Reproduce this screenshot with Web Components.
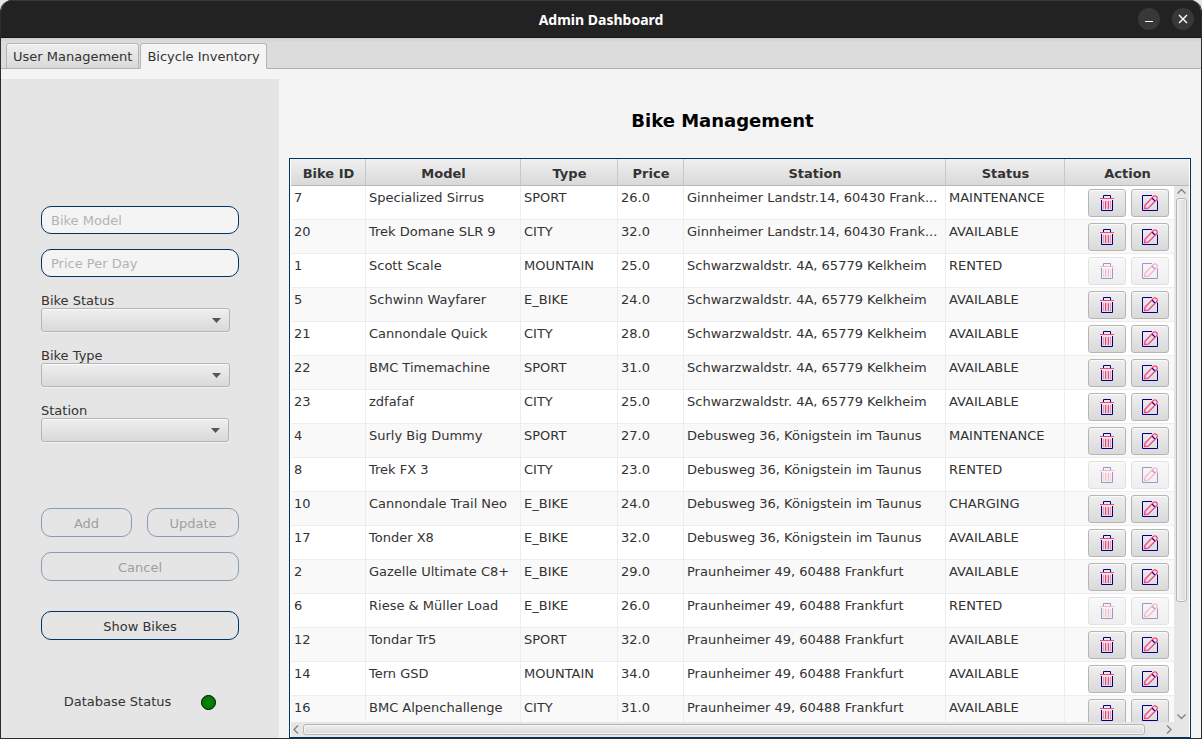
<!DOCTYPE html>
<html lang="en">
<head>
<meta charset="utf-8">
<title>Admin Dashboard</title>
<style>
  html { background: #e6e6e6; }
  body { margin: 0; font: 13px/16px "DejaVu Sans", Verdana, sans-serif; color: #333; }
</style>
</head>
<body>
<app-window>
  <title-bar slot="title">Admin Dashboard</title-bar>
  <tab-strip slot="tabs"></tab-strip>
  <bike-form slot="side"></bike-form>
  <bike-inventory>Bike Management</bike-inventory>
</app-window>

<script>
const element = (name, markup, setup) => customElements.define(name, class extends HTMLElement {
  constructor() {
    super();
    this.attachShadow({ mode: 'open' }).innerHTML =
      '<style>*, ::before, ::after { box-sizing: border-box; } :host { box-sizing: border-box; }</style>' + markup;
  }
  connectedCallback() { if (setup) setup.call(this, this.shadowRoot); }
});

element('app-window', `
<style>
  :host { display: flex; flex-direction: column; height: 100vh; border: 1px solid #2b2b2b; border-top: 0;
    border-radius: 12px 12px 0 0; background: #f4f4f4; overflow: hidden; }
  main { flex: 1; min-height: 0; display: flex; padding-top: 10px; }
  slot[name=side]::slotted(*) { flex: none; }
  slot:not([name])::slotted(*) { flex: 1; min-width: 0; }
</style>
<slot name="title"></slot>
<slot name="tabs"></slot>
<main><slot name="side"></slot><slot></slot></main>`);

element('title-bar', `
<style>
  :host { display: grid; grid-template-columns: 1fr auto 1fr; align-items: center; flex: none; height: 38px;
    background: #222; border-top: 1px solid #373737; border-bottom: 1px solid #151515; padding: 0 7px; }
  h1 { margin: 0; grid-column: 2; font: bold 14px/18px "Noto Sans", sans-serif; color: #fff; padding-top: 2px; }
  nav { display: flex; gap: 12px; justify-content: flex-end; }
  button { width: 22px; height: 22px; padding: 0; border: 0; border-radius: 50%; background: #383838; }
  svg { display: block; margin: auto; }
</style>
<h1><slot></slot></h1>
<nav>
  <button aria-label="Minimize"><svg width="22" height="22" fill="none" stroke="#fff"><path d="M7 13.500h8"/></svg></button>
  <button aria-label="Close"><svg width="22" height="22" fill="none" stroke="#fff" stroke-width="1.400"><path d="M7 7l8 8M15 7l-8 8"/></svg></button>
</nav>`);

element('tab-strip', `
<style>
  :host { display: flex; flex: none; height: 31px; padding: 5px 5px 0; gap: 1px; align-items: stretch;
    background: linear-gradient(#cfcfcf, #dcdcdc 4px); box-shadow: inset 0 -1px #b0b0b0; }
  button { padding: 2px 6px 0; border: 1px solid #b5b5b5; border-radius: 3px 3px 0 0; font: inherit; color: #333;
    background: linear-gradient(#efefef, #d9d9d9); box-shadow: inset 0 1px #f8f8f8; }
  button[aria-selected=true] { border-bottom-color: #f4f4f4; background: #f4f4f4; }
</style>
<button role="tab" aria-selected="false">User Management</button>
<button role="tab" aria-selected="true">Bicycle Inventory</button>`);

element('choice-field', `
<style>
  :host { display: grid; grid-template-columns: 1fr 28px; width: 189px; }
  label { grid-column: 1 / -1; height: 16px; line-height: 18px; }
  select { grid-area: 2 / 1 / 3 / 3; appearance: none; height: 24px; padding: 0 8px; border: 1px solid #b5b5b5;
    border-radius: 3px; font: inherit; background: linear-gradient(#efefef, #d9d9d9);
    box-shadow: inset 0 1px #fafafa, 0 1px #f0f0f0; }
  svg { grid-area: 2 / 2; place-self: center; pointer-events: none; z-index: 1; }
</style>
<label for="pick"><slot></slot></label>
<select id="pick"><option></option></select>
<svg width="9" height="5"><path d="M0 0h9L4.500 5z" fill="#555"/></svg>`);

element('bike-form', `
<style>
  :host { display: flex; flex-direction: column; width: 278px; padding: 127px 40px 0; background: #e5e5e5; }
  form { display: grid; gap: 15px; }
  input, button { width: 100%; font: inherit; border: 1px solid #003366; border-radius: 10px; }
  input { height: 28px; padding: 0 9px; background: #f4f4f4; color: #333; }
  input::placeholder { color: #b3b3b3; opacity: 1; }
  button { height: 29px; padding: 2px 0 0; background: transparent; color: #333; }
  button:disabled { opacity: .4; }
  .edit { display: grid; grid-template-columns: 91px 1fr; gap: 15px; margin-top: 66px; }
  .wide { grid-column: 1 / -1; }
  .show { margin-top: 30px; }
  .status { display: flex; align-items: center; justify-content: center; gap: 30px; height: 16px; margin-top: 54px; }
  .status span { line-height: 18px; }
  i { width: 15px; height: 15px; border: 1px solid #000; border-radius: 50%; background: #008000; }
  .narrow { width: 188px; }
</style>
<form>
  <input aria-label="Bike Model" placeholder="Bike Model">
  <input aria-label="Price Per Day" placeholder="Price Per Day">
  <choice-field>Bike Status</choice-field>
  <choice-field>Bike Type</choice-field>
  <choice-field class="narrow">Station</choice-field>
</form>
<div class="edit">
  <button disabled>Add</button><button disabled>Update</button>
  <button class="wide" disabled>Cancel</button>
</div>
<button class="show">Show Bikes</button>
<div class="status"><span>Database Status</span><i></i></div>`);

element('row-actions', `
<style>
  :host { display: flex; justify-content: center; gap: 5px; }
  button { width: 38px; height: 28px; padding: 0; border: 1px solid #b5b5b5; border-radius: 3px;
    background: linear-gradient(#efefef, #d9d9d9); box-shadow: inset 0 1px #fafafa; }
  button:disabled { opacity: .4; }
  svg { display: block; margin: auto; }
</style>
<button aria-label="Delete"><svg width="16" height="16" fill="none">
  <path d="M4.500 3V.5h7V3M2.500 5v10.500h11V5" stroke="#000080"/>
  <path d="M1 3.500h14" stroke="#ff4081"/>
  <path d="M4.500 6v8M11.500 6v8" stroke="#ff4081" stroke-opacity=".5"/>
  <path d="M6.500 6v8M9.500 6v8" stroke="#ff4081"/>
  <path d="M8 6v8" stroke="#ff4081" stroke-opacity=".4"/>
</svg></button>
<button aria-label="Edit"><svg width="16" height="16" fill="none">
  <path d="M10 .5H.5v15h15V5.500" stroke="#000080"/>
  <path d="M3 10.200L11.600 1.300a2.300 2.300 0 0 1 3.200 3.200L6.200 13.200l-3.700.4z" stroke="#ff4081" stroke-width="1.300"/>
  <path d="M10.200 3.300l2.600 2.600" stroke="#000080" stroke-width="1.300"/>
</svg></button>`, function (root) {
  root.querySelectorAll('button').forEach(b => b.disabled = this.hasAttribute('locked'));
});

const G = 'Ginnheimer Landstr.14, 60430 Frank...', S = 'Schwarzwaldstr. 4A, 65779 Kelkheim',
      D = 'Debusweg 36, Königstein im Taunus', P = 'Praunheimer 49, 60488 Frankfurt';
const bikes = [
  [7, 'Specialized Sirrus', 'SPORT', '26.0', G, 'MAINTENANCE'],
  [20, 'Trek Domane SLR 9', 'CITY', '32.0', G, 'AVAILABLE'],
  [1, 'Scott Scale', 'MOUNTAIN', '25.0', S, 'RENTED'],
  [5, 'Schwinn Wayfarer', 'E_BIKE', '24.0', S, 'AVAILABLE'],
  [21, 'Cannondale Quick', 'CITY', '28.0', S, 'AVAILABLE'],
  [22, 'BMC Timemachine', 'SPORT', '31.0', S, 'AVAILABLE'],
  [23, 'zdfafaf', 'CITY', '25.0', S, 'AVAILABLE'],
  [4, 'Surly Big Dummy', 'SPORT', '27.0', D, 'MAINTENANCE'],
  [8, 'Trek FX 3', 'CITY', '23.0', D, 'RENTED'],
  [10, 'Cannondale Trail Neo', 'E_BIKE', '24.0', D, 'CHARGING'],
  [17, 'Tonder X8', 'E_BIKE', '32.0', D, 'AVAILABLE'],
  [2, 'Gazelle Ultimate C8+', 'E_BIKE', '29.0', P, 'AVAILABLE'],
  [6, 'Riese & Müller Load', 'E_BIKE', '26.0', P, 'RENTED'],
  [12, 'Tondar Tr5', 'SPORT', '32.0', P, 'AVAILABLE'],
  [14, 'Tern GSD', 'MOUNTAIN', '34.0', P, 'AVAILABLE'],
  [16, 'BMC Alpenchallenge', 'CITY', '31.0', P, 'AVAILABLE']
];

element('bike-inventory', `
<style>
  :host { display: flex; flex-direction: column; padding: 0 10px; }
  h2 { flex: none; margin: 0; padding: 30px 35px 26px 0; font-size: 18px; line-height: 23px; text-align: center; color: #000; }
  .frame { flex: 1; min-height: 0; display: grid; grid-template: 27px minmax(0, 1fr) 15px / minmax(0, 1fr) 15px;
    padding: 0 1px; border: 1px solid #003366; background: #fff; }
  .view { grid-area: 1 / 1 / 3 / 3; overflow: hidden; }
  table { width: 100%; table-layout: fixed; border-collapse: separate; border-spacing: 0; }
  th { height: 27px; padding: 4px 0 0 1px; font-weight: bold; text-align: center; border-right: 1px solid #c8c8c8;
    border-bottom: 1px solid #b8b8b8; background: linear-gradient(#f0f0f0, #d9d9d9); }
  td { height: 34px; padding: 0 0 0 3px; line-height: 24px; vertical-align: top; white-space: nowrap; overflow: hidden;
    border-right: 1px solid #ededed; border-bottom: 1px solid #ededed; }
  td:last-child { padding-top: 3px; }
  th:last-child, td:last-child { border-right: 0; }
  tr:nth-child(even) td { background: #f9f9f9; }
  .id { width: 75px; } .model { width: 155px; } .type { width: 97px; } .price { width: 66px; } .status { width: 119px; } .action { width: 124px; }
  scroll-track.v { grid-area: 2 / 2; z-index: 1; }
  scroll-track.h { grid-area: 3 / 1; }
  .corner { grid-area: 3 / 2; background: #e6e6e6; }
</style>
<h2><slot></slot></h2>
<div class="frame">
  <div class="view"><table>
    <colgroup><col class="id"><col class="model"><col class="type"><col class="price"><col><col class="status"><col class="action"></colgroup>
    <thead><tr><th>Bike ID</th><th>Model</th><th>Type</th><th>Price</th><th>Station</th><th>Status</th><th>Action</th></tr></thead>
    <tbody></tbody>
  </table></div>
  <scroll-track class="v"></scroll-track>
  <scroll-track class="h"></scroll-track>
  <div class="corner"></div>
</div>`, function (root) {
  const body = root.querySelector('tbody');
  for (const bike of bikes) {
    const row = body.insertRow();
    for (const value of bike) row.insertCell().textContent = value;
    const actions = document.createElement('row-actions');
    actions.toggleAttribute('locked', bike[5] === 'RENTED');
    row.insertCell().append(actions);
  }
});

element('scroll-track', `
<style>
  :host { display: flex; background: #e6e6e6; }
  :host(.v) { flex-direction: column; }
  svg { flex: none; display: block; margin: auto; }
  .track { flex: 1; display: flex; flex-direction: inherit; min-width: 0; min-height: 0; }
  b { border: 1px solid #b5b5b5; border-radius: 3px; box-shadow: inset 0 0 0 1px #f4f4f4; }
  :host(.v) b { margin: 0 2px; flex: 1; max-height: 79%; background: linear-gradient(90deg, #efefef, #dadada); }
  :host(.h) b { width: 98%; margin: 2px 0; background: linear-gradient(#efefef, #dadada); }
  svg.far, svg.near { width: 12px; height: 15px; }
  :host(.v) svg.far, :host(.v) svg.near { width: 15px; height: 12px; }
</style>
<svg class="near" fill="none" stroke="#808080" stroke-width="1.300"><path/></svg>
<div class="track"><b></b></div>
<svg class="far" fill="none" stroke="#808080" stroke-width="1.300"><path/></svg>`, function (root) {
  const vertical = this.classList.contains('v');
  root.querySelector('.near path').setAttribute('d', vertical ? 'M3.500 7.500l4-4 4 4' : 'M7 3.500l-4 4 4 4');
  root.querySelector('.far path').setAttribute('d', vertical ? 'M3.500 4.500l4 4 4-4' : 'M5 3.500l4 4-4 4');
});
</script>
</body>
</html>
